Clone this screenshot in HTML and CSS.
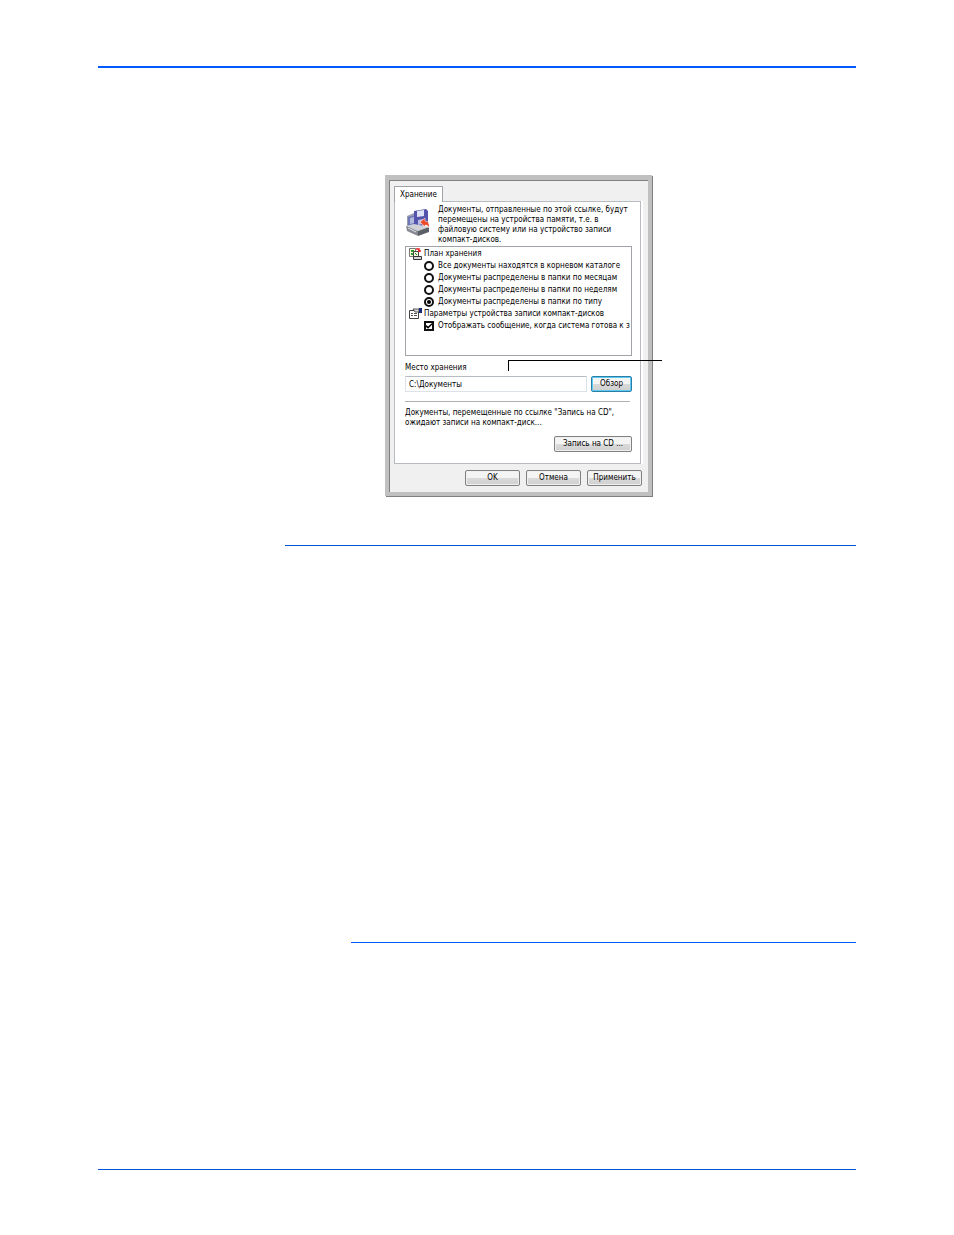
FILE: index.html
```html
<!DOCTYPE html>
<html lang="ru">
<head>
    <meta charset="UTF-8">
    <meta name="viewport" content="width=device-width, initial-scale=1.0">
    <title>Хранение</title>
    <link rel="stylesheet" href="styles.css">
</head>
<body>
    <main class="page">
        <hr class="rule rule-top">
        <section class="figure">
            <form class="dialog">
                <div class="tabs">
                    <button type="button" class="tab">Хранение</button>
                </div>
                <div class="panel">
                    <div class="intro">
                        <svg class="intro-icon" viewBox="0 0 26 28" aria-hidden="true">
                            <path d="M2 8l7-3 4 2v12l-9 2-2-2z" fill="#9a9eb0"/>
                            <path d="M3 9l8-2v10l-8 2z" fill="#6f76b8"/>
                            <path d="M5 10l4-1v6l-4 1z" fill="#b4badc"/>
                            <path d="M9 3l12-2 2 2v13l-11 3-3-2z" fill="#5454ac"/>
                            <path d="M12 3l7-1v6l-7 1z" fill="#dfe3f6"/>
                            <path d="M13 12l5-1v5l-5 1z" fill="#b9bde0"/>
                            <path d="M1 18l8-2 15 3-11 4z" fill="#d0d2d8"/>
                            <path d="M1 18l12 5v5L2 23z" fill="#868991"/>
                            <path d="M13 23l11-4v5l-11 4z" fill="#5c5f67"/>
                            <path d="M3 20l8 4" stroke="#e4e6ea" fill="none"/>
                            <path d="M15 14l5-4v3q5 0 4 7-1-3-4-3v2z" fill="#f04a2c" stroke="#fff" stroke-width=".5"/>
                        </svg>
                        <p class="intro-text">Документы, отправленные по этой ссылке, будут перемещены на устройства памяти, т.е. в файловую систему или на устройство записи компакт-дисков.</p>
                    </div>
                    <div class="options">
                        <div class="group">
                            <svg class="group-icon" viewBox="0 0 13 12" aria-hidden="true">
                                <path d="M.5.5h6v8h-6z" fill="#ffffd0" stroke="#777"/>
                                <path d="M2 2h3v2H2zM2 5h2v2H2z" fill="#2a9a3a"/>
                                <path d="M4.500 3.500h5v5h-5z" fill="#f4f8d8" stroke="#444"/>
                                <path d="M6 5l2 2" stroke="#1a8a2a"/>
                                <path d="M7 1h3v3M9 3h3" stroke="#e02020" stroke-width="1.500" fill="none"/>
                                <path d="M4.500 8.500h8v3h-8z" fill="#d8d8d8" stroke="#333"/>
                            </svg>
                            <span>План хранения</span>
                        </div>
                        <label class="option"><input type="radio" name="plan"><span>Все документы находятся в корневом каталоге</span></label>
                        <label class="option"><input type="radio" name="plan"><span>Документы распределены в папки по месяцам</span></label>
                        <label class="option"><input type="radio" name="plan"><span>Документы распределены в папки по неделям</span></label>
                        <label class="option"><input type="radio" name="plan" checked><span>Документы распределены в папки по типу</span></label>
                        <div class="group">
                            <svg class="group-icon" viewBox="0 0 13 12" aria-hidden="true">
                                <path d="M.5 2.500h9v8h-9z" fill="#fff" stroke="#444"/>
                                <path d="M2 5.500h2M5 5.500h3M2 7.500h2M5 7.500h3" stroke="#555"/>
                                <path d="M4 1h6v3H6z" fill="#ddd" stroke="#333" stroke-width=".8"/>
                                <path d="M10 0h3v5h-3z" fill="#182a78"/>
                            </svg>
                            <span>Параметры устройства записи компакт-дисков</span>
                        </div>
                        <label class="option"><input type="checkbox" checked><span>Отображать сообщение, когда система готова к з</span></label>
                    </div>
                    <label class="field-label" for="location">Место хранения</label>
                    <div class="field">
                        <input type="text" id="location" value="C:\Документы">
                        <button type="button" class="btn btn-focus">Обзор</button>
                    </div>
                    <hr class="separator">
                    <p class="note">Документы, перемещенные по ссылке "Запись на CD", ожидают записи на компакт-диск...</p>
                    <div class="burn">
                        <button type="button" class="btn">Запись на CD ...</button>
                    </div>
                </div>
                <div class="actions">
                    <button type="button" class="btn">OK</button>
                    <button type="button" class="btn">Отмена</button>
                    <button type="button" class="btn">Применить</button>
                </div>
                <span class="callout"></span>
            </form>
        </section>
        <hr class="rule rule-section">
        <hr class="rule rule-note">
        <hr class="rule rule-bottom">
    </main>
</body>
</html>
```
FILE: styles.css
```css
* {
    box-sizing: border-box;
}

body {
    margin: 0;
    background-color: #fff;
    color: #000;
    font-family: "DejaVu Sans Condensed", "DejaVu Sans", sans-serif;
    font-size: 8px;
    line-height: 10px;
}

p {
    margin: 0;
}

button,
input {
    margin: 0;
    font: inherit;
    color: inherit;
}

.page {
    padding: 66px 98px 64px;
}

.rule {
    margin: 0;
    border: 0;
    height: 1px;
    background-color: #0055d4;
}

.rule-top {
    height: 2px;
    background-color: #005aff;
}

.rule-section {
    margin: 49px 0 0 187px;
}

.rule-note {
    margin: 396px 0 0 253px;
    background-color: #005aff;
}

.rule-bottom {
    margin-top: 226px;
}

.figure {
    padding: 107px 0 0 287px;
}

/* Dialog window */
.dialog {
    position: relative;
    width: 267px;
    padding: 6px 6px 6px 5px;
    background-color: #f0f0f0;
    border: 4px solid #c0c0c0;
    border-top-width: 5px;
    box-shadow: inset 1px 1px #808080, 1px 1px #808080;
}

.tabs {
    display: flex;
}

.tab {
    height: 16px;
    margin-bottom: -1px;
    padding: 0 5px;
    background-color: #fff;
    border: 1px solid #a0a4a8;
    border-bottom: 0;
    z-index: 1;
}

.panel {
    margin-right: 1px;
    padding: 3px 8px 11px 10px;
    background-color: #fff;
    border: 1px solid #b8bcc0;
    box-shadow: 2px 0 #fff;
}

.intro {
    display: flex;
    gap: 7px;
    margin-bottom: 1px;
}

.intro-icon {
    flex: none;
    width: 26px;
    height: 28px;
    margin-top: 3px;
}

.intro-text {
    flex: 1;
}

/* Options list */
.options {
    height: 110px;
    padding: 1px 0 0 3px;
    overflow: hidden;
    white-space: nowrap;
    border: 1px solid #a0a4a8;
}

.group,
.option {
    display: flex;
    align-items: center;
    height: 12px;
}

.group {
    gap: 2px;
}

.group-icon {
    flex: none;
    width: 13px;
    height: 12px;
}

.option {
    gap: 4px;
    padding-left: 15px;
}

.option input {
    flex: none;
    display: grid;
    place-items: center;
    appearance: none;
    width: 10px;
    height: 10px;
    background-color: #fff;
    border: 2px solid #111;
}

.option input[type="radio"] {
    border-radius: 50%;
}

.option input[type="radio"]:checked::before {
    content: "";
    width: 4px;
    height: 4px;
    border-radius: 50%;
    background-color: #000;
}

.option input[type="checkbox"]:checked::before {
    content: "";
    width: 6px;
    height: 6px;
    background-color: #000;
    clip-path: polygon(0 35%, 35% 60%, 100% 0, 100% 30%, 35% 95%, 0 65%);
}

.field-label {
    display: block;
    margin: 7px 0 3px;
}

.field {
    display: flex;
    gap: 4px;
}

.field input {
    flex: 1;
    min-width: 0;
    height: 16px;
    padding: 0 3px;
    border: 1px solid #dde1ea;
    border-top-color: #b8bcc4;
}

.field .btn {
    width: 41px;
}

.separator {
    margin: 9px 2px 6px 0;
    border: 0;
    height: 1px;
    background-color: #b0b0b0;
}

.note {
    margin-bottom: 8px;
}

.burn,
.actions {
    display: flex;
    justify-content: flex-end;
    gap: 6px;
}

.actions {
    margin-top: 6px;
}

.btn {
    width: 55px;
    height: 16px;
    padding: 0;
    background: linear-gradient(#f4f4f4 50%, #dadada 50%, #d0d0d0);
    border: 1px solid #808080;
    border-radius: 2px;
    box-shadow: inset 0 0 0 1px #f0f0f0;
    white-space: nowrap;
}

.burn .btn {
    width: 78px;
}

.btn-focus {
    border-color: #2c7ea8;
    box-shadow: inset 0 0 0 1px #5ccdf0;
}

/* Leader line from the location field */
.callout {
    position: absolute;
    top: 180px;
    left: 119px;
    width: 154px;
    height: 11px;
    border-top: 1px solid #000;
    border-left: 1px solid #000;
}
```
